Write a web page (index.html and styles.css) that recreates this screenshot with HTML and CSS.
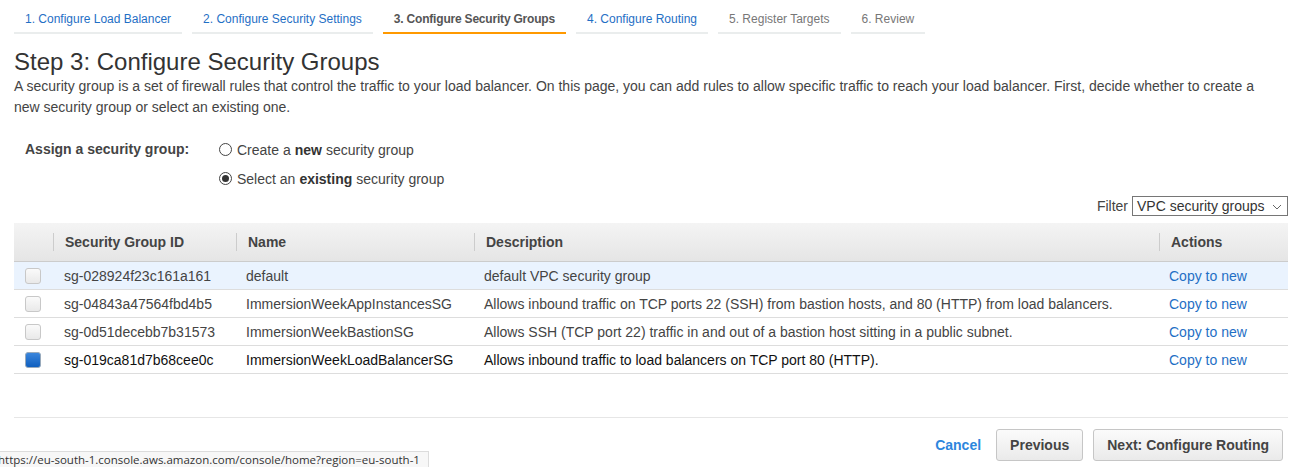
FILE: index.html
```html
<!DOCTYPE html>
<html>
<head>
<meta charset="utf-8">
<link rel="stylesheet" href="styles.css">
</head>
<body>
<div class="page">
  <nav class="tabs">
    <a class="tab link">1. Configure Load Balancer</a>
    <a class="tab link">2. Configure Security Settings</a>
    <a class="tab active">3. Configure Security Groups</a>
    <a class="tab link">4. Configure Routing</a>
    <a class="tab muted">5. Register Targets</a>
    <a class="tab muted">6. Review</a>
  </nav>

  <h1 class="title">Step 3: Configure Security Groups</h1>
  <p class="intro">A security group is a set of firewall rules that control the traffic to your load balancer. On this page, you can add rules to allow specific traffic to reach your load balancer. First, decide whether to create a new security group or select an existing one.</p>

  <div class="assign">
    <div class="assign-label">Assign a security group:</div>
    <div class="assign-options">
      <label class="option"><span class="radio"></span>Create a <b>new</b> security group</label>
      <label class="option"><span class="radio checked"></span>Select an <b>existing</b> security group</label>
    </div>
  </div>

  <div class="filter-row">
    <span class="filter-label">Filter</span>
    <div class="select">VPC security groups
      <svg class="chev" width="10" height="6" viewBox="0 0 10 6"><path d="M1 1 L5 5 L9 1" fill="none" stroke="#666" stroke-width="1"/></svg>
    </div>
  </div>

  <table class="grid">
    <colgroup>
      <col class="c-check"><col class="c-id"><col class="c-name"><col class="c-desc"><col class="c-act">
    </colgroup>
    <thead>
      <tr>
        <th></th>
        <th><span class="th">Security Group ID</span></th>
        <th><span class="th">Name</span></th>
        <th><span class="th">Description</span></th>
        <th><span class="th">Actions</span></th>
      </tr>
    </thead>
    <tbody>
      <tr class="hover">
        <td><span class="cb"></span></td>
        <td>sg-028924f23c161a161</td>
        <td>default</td>
        <td>default VPC security group</td>
        <td><a class="copy">Copy to new</a></td>
      </tr>
      <tr>
        <td><span class="cb"></span></td>
        <td>sg-04843a47564fbd4b5</td>
        <td>ImmersionWeekAppInstancesSG</td>
        <td>Allows inbound traffic on TCP ports 22 (SSH) from bastion hosts, and 80 (HTTP) from load balancers.</td>
        <td><a class="copy">Copy to new</a></td>
      </tr>
      <tr>
        <td><span class="cb"></span></td>
        <td>sg-0d51decebb7b31573</td>
        <td>ImmersionWeekBastionSG</td>
        <td>Allows SSH (TCP port 22) traffic in and out of a bastion host sitting in a public subnet.</td>
        <td><a class="copy">Copy to new</a></td>
      </tr>
      <tr class="selected">
        <td><span class="cb on"></span></td>
        <td>sg-019ca81d7b68cee0c</td>
        <td>ImmersionWeekLoadBalancerSG</td>
        <td>Allows inbound traffic to load balancers on TCP port 80 (HTTP).</td>
        <td><a class="copy">Copy to new</a></td>
      </tr>
    </tbody>
  </table>

  <div class="footer">
    <a class="cancel">Cancel</a>
    <button class="btn">Previous</button>
    <button class="btn">Next: Configure Routing</button>
  </div>
</div>
<div class="status">https://eu-south-1.console.aws.amazon.com/console/home?region=eu-south-1</div>
</body>
</html>
```

FILE: styles.css
```css
html, body {
  margin: 0;
  padding: 0;
  background: #fff;
}
body {
  font-family: "Liberation Sans", Arial, sans-serif;
  font-size: 14px;
  color: #444;
}
.page {
  padding: 0 3px 0 14px;
}
.tabs {
  display: flex;
  gap: 10px;
}
.tab {
  font-size: 12px;
  padding: 0 11px;
  border-bottom: 2px solid #eaeded;
  white-space: nowrap;
  height: 32px;
  line-height: 39px;
}
.tab.link { color: #1f6fc5; }
.tab.muted { color: #777; }
.tab.active {
  color: #555;
  font-weight: bold;
  letter-spacing: -0.2px;
  border-bottom-color: #f90;
}
.title {
  font-size: 24px;
  font-weight: normal;
  color: #333;
  margin: 14px 0 0 0;
  line-height: 28px;
}
.intro {
  margin: 0;
  line-height: 21px;
  color: #444;
  padding-right: 30px;
}
.assign {
  display: flex;
  margin-top: 17px;
  padding-left: 11px;
}
.assign-label {
  width: 194px;
  font-weight: bold;
  line-height: 29px;
}
.assign-options {
  display: flex;
  flex-direction: column;
}
.option {
  display: flex;
  align-items: center;
  height: 29px;
  color: #444;
}
.option b { margin: 0 4px; font-weight: bold; color: #333; }
.radio {
  width: 11px;
  height: 11px;
  border: 1px solid #444;
  border-radius: 50%;
  margin-right: 5px;
  position: relative;
  background: #fff;
}
.radio.checked::after {
  content: "";
  position: absolute;
  left: 2px;
  top: 2px;
  width: 7px;
  height: 7px;
  border-radius: 50%;
  background: #333;
}
.filter-row {
  display: flex;
  justify-content: flex-end;
  align-items: center;
  margin-top: 3px;
  gap: 4px;
}
.filter-label { color: #444; }
.select {
  height: 18px;
  border: 1px solid #767676;
  display: flex;
  align-items: center;
  padding-left: 4px;
  width: 150px;
  color: #333;
  position: relative;
}
.chev {
  position: absolute;
  right: 5px;
  top: 7px;
}
.grid {
  width: 100%;
  border-collapse: collapse;
  margin-top: 7px;
  table-layout: fixed;
}
.c-check { width: 39px; }
.c-id { width: 183px; }
.c-name { width: 238px; }
.c-desc { width: 685px; }
.grid thead th {
  height: 38px;
  padding: 0;
  background: linear-gradient(#f4f4f4, #e5e5e5);
  border-bottom: 1px solid #ccc;
  text-align: left;
  font-weight: bold;
  color: #444;
}
.th {
  display: block;
  border-left: 1px solid #ccc;
  padding-left: 11px;
  line-height: 18px;
}
.grid td {
  height: 27px;
  padding: 0 0 0 10px;
  border-bottom: 1px solid #ddd;
  color: #444;
  white-space: nowrap;
  overflow: hidden;
}
.grid td:first-child { padding-left: 11px; }
.grid td:nth-child(2) { padding-left: 11px; }
.grid tr.hover td { background: #eaf3fe; }
.grid tr.selected td { color: #111; }
.cb {
  display: block;
  width: 14px;
  height: 14px;
  border: 1px solid #c8c8c8;
  border-radius: 3px;
  background: linear-gradient(#fafafa, #e9e9e9);
}
.cb.on {
  border-color: #9ab;
  background: linear-gradient(#3b86dc, #0f5fbf);
}
.copy { color: #1f6fc5; }
.footer {
  display: flex;
  justify-content: flex-end;
  align-items: center;
  gap: 10px;
  margin-top: 43px;
  border-top: 1px solid #e6e6e6;
  padding-top: 11px;
  padding-right: 5px;
}
.cancel {
  color: #2d86dd;
  font-weight: bold;
  margin-right: 5px;
}
.btn {
  font-family: "Liberation Sans", Arial, sans-serif;
  font-size: 14px;
  font-weight: bold;
  color: #444;
  height: 32px;
  padding: 0 13px;
  border: 1px solid #c6c6c6;
  border-radius: 3px;
  background: linear-gradient(#fbfbfb, #eaeaea);
}
.status {
  position: fixed;
  left: 0;
  bottom: 0;
  width: 428px;
  height: 15px;
  border: 1px solid #dcdcdc;
  border-left: none;
  border-bottom: none;
  background: #f7f7f7;
  font-family: "Open Sans", sans-serif;
  font-size: 11.5px;
  line-height: 15px;
  color: #333;
  white-space: nowrap;
  overflow: hidden;
  text-indent: -2px;
}
```
